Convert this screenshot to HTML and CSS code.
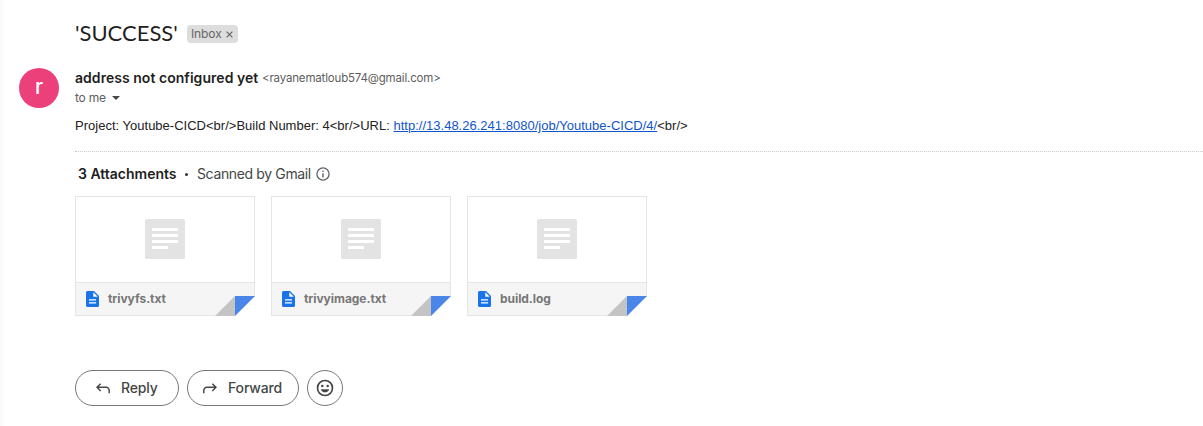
FILE: index.html
```html
<!DOCTYPE html>
<html lang="en">
<head>
<meta charset="utf-8">
<title>'SUCCESS'</title>
<link rel="stylesheet" href="styles.css">
</head>
<body>
<svg class="defs" width="0" height="0">
  <symbol id="thumb" viewBox="0 0 40 40"><rect width="40" height="40" rx="1.5" fill="#e3e3e3"/><path d="M7 9h26v3H7zM7 15h26v3H7zM7 21h26v3H7zM7 27h16v3H7z" fill="#fff"/></symbol>
  <symbol id="doc" viewBox="0 0 13 16"><path d="M1.5 0H8l5 5v9.5a1.5 1.5 0 0 1-1.500 1.500h-10A1.500 1.500 0 0 1 0 14.500v-13A1.500 1.500 0 0 1 1.500 0z" fill="#1a73e8"/><path d="M7.300 1.200v4.500h4.500z" fill="#fff"/><path d="M3 8.200h7v1.400H3zM3 11.200h7v1.400H3z" fill="#fff"/></symbol>
  <symbol id="fold" viewBox="0 0 40 20"><path d="M40 0v20H20z" fill="#fff"/><path d="M0 20L20 0v20z" fill="#c4c4c4"/><path d="M20 0h20L20 20z" fill="#4986e7"/></symbol>
</svg>
<main class="mail">
  <header class="subject"><h1>'SUCCESS'</h1><span class="label"><span class="inbox">Inbox</span><svg width="7" height="7" viewBox="0 0 7 7"><path d="M.6.6l5.800 5.800M6.400.6L.6 6.400" stroke="#666" stroke-width="1.200"/></svg></span></header>
  <section class="sender">
    <div class="avatar">r</div>
    <div class="who">
      <div class="from"><b>address not configured yet</b><span class="email">&lt;rayanematloub574@gmail.com&gt;</span></div>
      <div class="to"><span>to me</span><svg width="8" height="4" viewBox="0 0 8 4"><path d="M0 0h8L4 4z" fill="#444746"/></svg></div>
    </div>
  </section>
  <p class="body">Project: Youtube-CICD&lt;br/&gt;Build Number: 4&lt;br/&gt;URL: <a href="#">http://13.48.26.241:8080/job/Youtube-CICD/4/</a>&lt;br/&gt;</p>
  <section class="attachments">
    <div class="summary"><b>3 Attachments</b><i class="dot"></i><span class="scanned">Scanned by Gmail</span><svg width="14" height="14" viewBox="0 0 14 14"><circle cx="7" cy="7" r="6.100" fill="none" stroke="#5f6368" stroke-width="1.300"/><path d="M6.300 6.200h1.400v4.300H6.300zM6.300 3.600h1.400V5H6.300z" fill="#5f6368"/></svg></div>
    <div class="cards">
      <article class="card"><div class="preview"><svg width="40" height="40"><use href="#thumb"/></svg></div><div class="file"><svg width="13" height="16"><use href="#doc"/></svg><span>trivyfs.txt</span></div><svg class="fold" width="40" height="20"><use href="#fold"/></svg></article>
      <article class="card"><div class="preview"><svg width="40" height="40"><use href="#thumb"/></svg></div><div class="file"><svg width="13" height="16"><use href="#doc"/></svg><span>trivyimage.txt</span></div><svg class="fold" width="40" height="20"><use href="#fold"/></svg></article>
      <article class="card"><div class="preview"><svg width="40" height="40"><use href="#thumb"/></svg></div><div class="file"><svg width="13" height="16"><use href="#doc"/></svg><span>build.log</span></div><svg class="fold" width="40" height="20"><use href="#fold"/></svg></article>
    </div>
  </section>
  <footer class="actions">
    <button class="reply"><svg width="14" height="11" viewBox="0 0 14 11"><path d="M4.700.7L1 4.300l3.700 3.600M1 4.300h9.200a3 3 0 0 1 3 3v3" fill="none" stroke="#444746" stroke-width="1.450"/></svg><span>Reply</span></button>
    <button class="forward"><svg width="14" height="11" viewBox="0 0 14 11"><path d="M9.300.7L13 4.300 9.300 7.900M13 4.300H3.800a3 3 0 0 0-3 3v3" fill="none" stroke="#444746" stroke-width="1.450"/></svg><span>Forward</span></button>
    <button class="react" aria-label="Add reaction"><svg width="18" height="18" viewBox="0 0 18 18"><circle cx="9" cy="9" r="7.500" fill="none" stroke="#444746" stroke-width="1.700"/><circle cx="6.300" cy="7" r="1.250" fill="#444746"/><circle cx="11.700" cy="7" r="1.250" fill="#444746"/><path d="M4.800 10.200h8.400a4.400 4.400 0 0 1-8.400 0z" fill="#444746"/></svg></button>
  </footer>
</main>
</body>
</html>
```
FILE: styles.css
```css
* { box-sizing: border-box; }
body { margin: 0; background: #fff; color: #1f1f1f; font-family: Inter, "Liberation Sans", sans-serif; }
svg { display: block; flex: none; }
.defs { position: absolute; }
.mail { height: 426px; border-left: 3px solid #f8fafd; padding: 20px 0 0 72px; overflow: hidden; white-space: nowrap; }
.subject { display: flex; height: 28px; align-items: center; }
.subject h1 { width: 112px; height: 28px; margin: 0; font: 400 22px/26px Lato, sans-serif; }
.label { display: flex; align-items: center; width: 51px; height: 18px; padding-left: 4px; border-radius: 4px; background: #ddd; color: #666; font-size: 12px; line-height: 18px; letter-spacing: -.1px; }
.inbox { width: 35px; }
.sender { display: flex; height: 40px; margin: 20px 0 0 -56px; }
.avatar { width: 40px; height: 40px; margin-right: 16px; border-radius: 50%; background: #ec407a; color: #fff; font: 500 21px/38px Inter, sans-serif; text-align: center; }
.from { display: flex; height: 20px; align-items: center; line-height: 20px; }
.from b { width: 187px; font-size: 14px; font-weight: 600; letter-spacing: .04px; }
.email { color: #5e5e5e; font-size: 11.5px; letter-spacing: -.17px; }
.to { display: flex; height: 20px; align-items: center; color: #5e5e5e; font-size: 12px; }
.to span { width: 37px; height: 20px; line-height: 20px; letter-spacing: -.2px; }
.body { height: 20px; margin: 8px 0 0; color: #222; font: 13px/20px "Liberation Sans", Arial, sans-serif; letter-spacing: .01px; }
.body a { color: #15c; }
.attachments { margin-top: 15px; border-top: 1px dotted #c7c7c7; }
.summary { display: flex; height: 20px; margin-top: 12px; padding-left: 3px; align-items: center; font-size: 14px; line-height: 20px; }
.summary b { width: 107px; font-weight: 600; }
.dot { width: 3px; height: 3px; margin-right: 9px; border-radius: 50%; background: #333; }
.scanned { width: 119px; color: #444746; letter-spacing: -.36px; }
.cards { display: flex; gap: 16px; margin-top: 12px; }
.card { position: relative; width: 180px; height: 120px; border: 1px solid #e5e5e5; }
.preview { display: flex; height: 85px; padding-bottom: 1px; justify-content: center; align-items: center; }
.file { display: flex; height: 33px; padding-left: 10px; gap: 9px; align-items: center; border-top: 1px solid #e5e5e5; background: #f5f5f5; color: #777; font-size: 12px; font-weight: 700; }
.file span { height: 20px; line-height: 20px; letter-spacing: -.05px; }
.fold { position: absolute; right: -1px; bottom: -1px; }
.actions { display: flex; gap: 8px; margin-top: 54px; }
button { display: flex; height: 36px; align-items: center; padding: 0; border: 1px solid #747775; border-radius: 18px; background: #fff; color: #444746; font: 500 14px/20px Inter, sans-serif; letter-spacing: -.15px; }
.reply { width: 104px; padding-left: 20px; gap: 11px; }
.forward { width: 112px; padding-left: 15px; gap: 11px; }
.react { width: 36px; justify-content: center; }
```
